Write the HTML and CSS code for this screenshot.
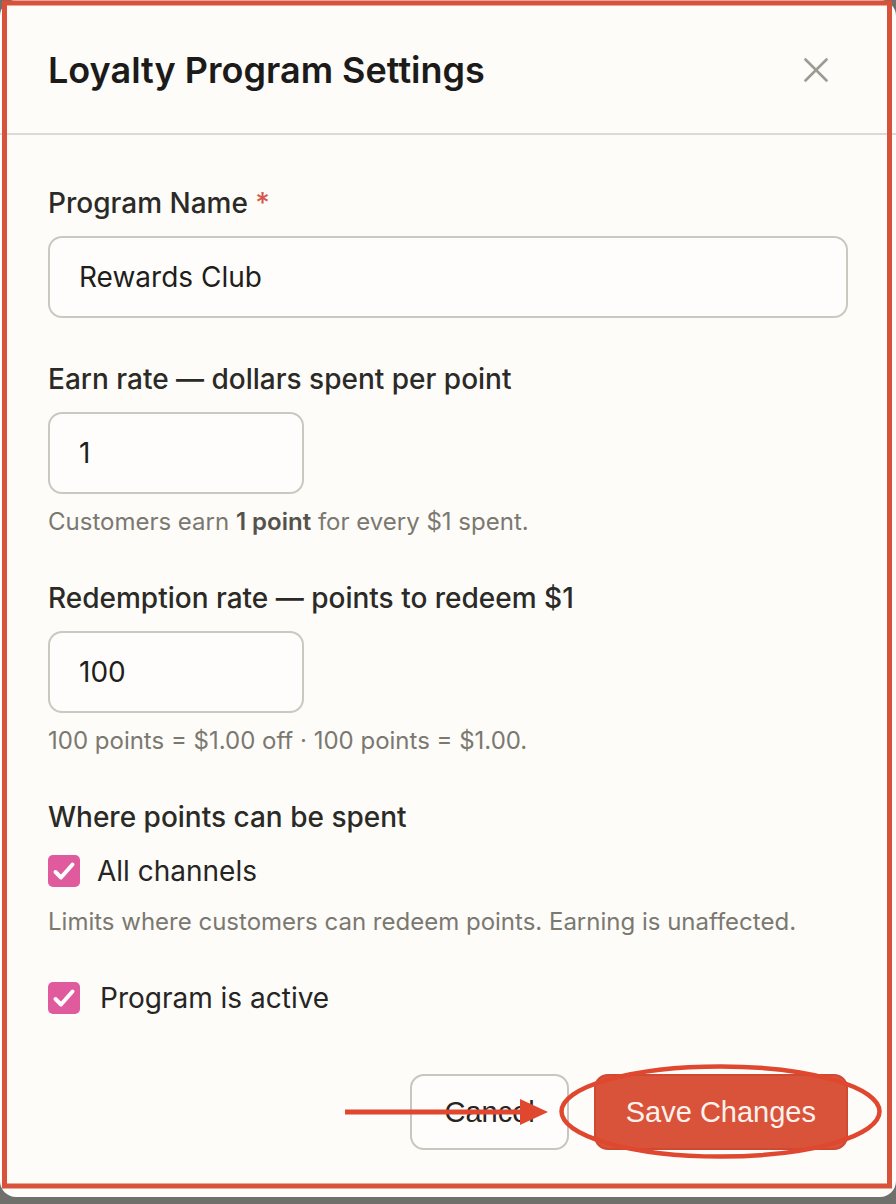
FILE: index.html
```html
<!DOCTYPE html>
<html lang="en">
<head>
<meta charset="utf-8">
<title>Loyalty Program Settings</title>
<link rel="stylesheet" href="styles.css">
</head>
<body>
<div class="modal">
  <header class="modal-header">
    <h2 class="modal-title">Loyalty Program Settings</h2>
    <button class="close-btn" aria-label="Close">
      <svg width="24" height="24" viewBox="0 0 24 24"><path d="M1.5 1.5 L22.5 22.5 M22.5 1.5 L1.5 22.5" stroke="#9c9b92" stroke-width="2.6" stroke-linecap="round" fill="none"/></svg>
    </button>
  </header>
  <div class="modal-body">
    <div class="field">
      <label class="field-label">Program Name <span class="req">*</span></label>
      <input class="text-input full" type="text" value="Rewards Club">
    </div>
    <div class="field">
      <label class="field-label">Earn rate — dollars spent per point</label>
      <input class="text-input short" type="text" value="1">
      <p class="helper">Customers earn <strong>1 point</strong> for every $1 spent.</p>
    </div>
    <div class="field">
      <label class="field-label">Redemption rate — points to redeem $1</label>
      <input class="text-input short" type="text" value="100">
      <p class="helper">100 points = $1.00 off · 100 points = $1.00.</p>
    </div>
    <div class="field">
      <div class="field-label group-label">Where points can be spent</div>
      <div class="check-row">
        <span class="check"><svg width="32" height="32" viewBox="0 0 32 32"><path d="M7.5 17 L13 22.5 L24.5 9.5" stroke="#ffffff" stroke-width="4" stroke-linecap="round" stroke-linejoin="round" fill="none"/></svg></span>
        <span class="check-text">All channels</span>
      </div>
      <p class="helper helper-gap">Limits where customers can redeem points. Earning is unaffected.</p>
    </div>
    <div class="field">
      <div class="check-row wide">
        <span class="check"><svg width="32" height="32" viewBox="0 0 32 32"><path d="M7.5 17 L13 22.5 L24.5 9.5" stroke="#ffffff" stroke-width="4" stroke-linecap="round" stroke-linejoin="round" fill="none"/></svg></span>
        <span class="check-text">Program is active</span>
      </div>
    </div>
  </div>
  <footer class="modal-footer">
    <button class="btn btn-cancel">Cancel</button>
    <button class="btn btn-save">Save Changes</button>
  </footer>
</div>
<svg class="annotations" width="896" height="1204" viewBox="0 0 896 1204">
  <rect x="4.5" y="3" width="885" height="1183" fill="none" stroke="#d8513a" stroke-width="5"/>
  <ellipse cx="720.5" cy="1111.5" rx="159" ry="45" fill="none" stroke="#e0472f" stroke-width="4.5"/>
  <line x1="345" y1="1112" x2="524" y2="1112" stroke="#e0472f" stroke-width="5"/>
  <polygon points="520,1099 548,1112 520,1125" fill="#e0472f"/>
</svg>
</body>
</html>
```

FILE: styles.css
```css
* { box-sizing: border-box; }

html, body {
  margin: 0;
  padding: 0;
}

body {
  width: 896px;
  height: 1204px;
  background: #6f6f6b;
  font-family: Inter, "Noto Sans", sans-serif;
  position: relative;
  overflow: hidden;
}

.modal {
  width: 896px;
  height: 1197px;
  background: #fdfcf9;
  border-radius: 16px;
  display: flex;
  flex-direction: column;
}

.modal-header {
  display: flex;
  align-items: center;
  justify-content: space-between;
  padding: 50px 68px 43px 48px;
  border-bottom: 2px solid #dcdad5;
}

.modal-title {
  margin: 0;
  font-size: 36px;
  line-height: 40px;
  font-weight: 600;
  color: #1c1b19;
}

.close-btn {
  border: 0;
  background: none;
  padding: 0;
  width: 24px;
  height: 24px;
  display: flex;
}

.modal-body {
  padding: 51px 48px 0 48px;
  display: flex;
  flex-direction: column;
  gap: 44px;
}

.field {
  display: flex;
  flex-direction: column;
  align-items: flex-start;
}

.field-label {
  display: block;
  font-size: 28px;
  line-height: 34px;
  font-weight: 500;
  color: #2b2a27;
  margin-bottom: 16px;
}

.group-label {
  margin-bottom: 20px;
}

.req {
  color: #d4584b;
}

.text-input {
  height: 82px;
  border: 2px solid #cac8c0;
  border-radius: 14px;
  padding: 0 29px;
  font-family: Inter, "Noto Sans", sans-serif;
  font-size: 28px;
  color: #1f1e1c;
  background: #fefdfb;
  outline: none;
}

.text-input.full { width: 800px; }
.text-input.short { width: 256px; }

.helper {
  margin: 13px 0 0 0;
  font-size: 24px;
  line-height: 30px;
  color: #7b7870;
}

.helper strong {
  font-weight: 600;
  color: #55524c;
}

.helper-gap { margin-top: 19px; }

.check-row {
  display: flex;
  align-items: center;
  gap: 17px;
  height: 34px;
}

.check-row.wide { gap: 20px; }

.check {
  width: 32px;
  height: 32px;
  border-radius: 5px;
  background: #e05a9e;
  display: flex;
}

.check-text {
  font-size: 28px;
  line-height: 34px;
  color: #262523;
}

.modal-footer {
  display: flex;
  justify-content: flex-end;
  gap: 25px;
  padding: 59px 48px 0 48px;
}

.btn {
  height: 76px;
  border-radius: 14px;
  font-family: "Liberation Sans", Arial, sans-serif;
  font-size: 29px;
}

.btn-cancel {
  border: 2px solid #c8c6bf;
  background: #fefdfb;
  color: #262523;
  padding: 0 32px;
}

.btn-save {
  border: 2px solid #cf4a33;
  background: #d9533b;
  color: #fdf1ec;
  padding: 0 30px;
}

.annotations {
  position: absolute;
  left: 0;
  top: 0;
  pointer-events: none;
}
```
